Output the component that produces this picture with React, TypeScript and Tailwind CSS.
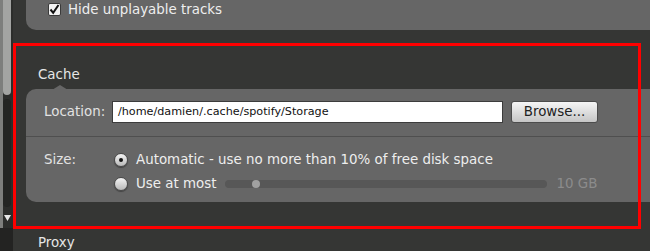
import React from "react";

const font = { fontFamily: '"DejaVu Sans", "Liberation Sans", sans-serif' };

function Radio({ checked }: { checked?: boolean }) {
  return (
    <span className="flex h-[14px] w-[14px] items-center justify-center rounded-full border border-[#4a4a4a] bg-gradient-to-b from-[#f4f4f4] to-[#b9b9b9] shadow-[0_1px_1px_rgba(0,0,0,0.35)]">
      {checked && <span className="h-[4px] w-[4px] rounded-full bg-[#111]" />}
    </span>
  );
}

function Scrollbar() {
  return (
    <div className="flex w-[13px] shrink-0 flex-col">
      <div className="flex h-[228px] bg-[#2c2d2b]">
        <div className="w-[3px] bg-[#7d7e7c]" />
        <div className="flex w-[8px] flex-col">
          <div className="h-[95px] rounded-b-[4px] bg-[#a3a4a2]" />
          <div className="mt-[4px] h-[108px] rounded-[4px] bg-[#242523]" />
          <div className="mt-[8px] flex justify-center">
            <svg width="7" height="6" viewBox="0 0 7 6">
              <path d="M0 0 L7 0 L3.5 6 Z" fill="#e8e8e8" />
            </svg>
          </div>
        </div>
      </div>
      <div className="flex-1 bg-[#232322]" />
    </div>
  );
}

export default function App() {
  return (
    <div
      className="relative flex h-[251px] w-[650px] overflow-hidden bg-[#353634] text-[13.4px] text-[#e4e4e4]"
      style={font}
    >
      <Scrollbar />

      <div className="flex flex-1 flex-col">
        {/* Previous section tail */}
        <div className="ml-[13px] flex h-[31px] items-start rounded-bl-[10px] bg-[#666666] pl-[22px] pt-[2px]">
          <span className="mt-[1px] flex h-[13px] w-[13px] items-center justify-center rounded-[2px] border border-[#3a3a3a] bg-[#f2f2f2]">
            <svg width="11" height="11" viewBox="0 0 11 11">
              <path d="M1.5 5.5 L4.2 8.8 L9.5 1" fill="none" stroke="#111" strokeWidth="2" />
            </svg>
          </span>
          <span className="ml-[7px] leading-[16px] text-[#eeeeee]">Hide unplayable tracks</span>
        </div>

        {/* Cache */}
        <div className="mt-[37px] pl-[25px] leading-[16px] text-[#e6e6e6]">Cache</div>
        <div className="relative ml-[13px] mt-[6px] flex flex-col rounded-l-[10px] bg-[#666666]">
          <svg
            className="absolute left-[26px] top-[-4px]"
            width="16"
            height="5"
            viewBox="0 0 16 5"
          >
            <path d="M0 5 L8 0 L16 5 Z" fill="#666666" />
          </svg>
          <div className="flex items-center pb-[13px] pl-[18px] pt-[12px]">
            <span className="w-[68px] text-[#e2e2e2]">Location:</span>
            <div className="flex h-[22px] w-[391px] items-center border border-[#3c3c3c] bg-white pl-[5px] text-[11.2px] text-[#111]">
              /home/damien/.cache/spotify/Storage
            </div>
            <button className="ml-[8px] h-[22px] w-[87px] rounded-[3px] border border-[#4c4c4c] bg-gradient-to-b from-[#f6f6f6] to-[#c6c6c6] text-[13.4px] text-[#222]">
              Browse...
            </button>
          </div>
          <div className="h-px bg-[#4f4f4f]" />
          <div className="flex pb-[6px] pl-[18px] pt-[11px]">
            <span className="w-[70px] pt-[4px] leading-[16px] text-[#e2e2e2]">Size:</span>
            <div className="flex flex-col">
              <div className="flex h-[24px] items-center">
                <Radio checked />
                <span className="ml-[8px] text-[#eeeeee]">
                  Automatic - use no more than 10% of free disk space
                </span>
              </div>
              <div className="flex h-[24px] items-center">
                <Radio />
                <span className="ml-[8px] text-[#eeeeee]">Use at most</span>
                <div className="ml-[9px] flex h-[8px] w-[322px] items-center rounded-full bg-[#575757]">
                  <span className="ml-[27px] h-[8px] w-[8px] rounded-full bg-[#a0a0a0]" />
                </div>
                <span className="ml-[9px] text-[#8c8c8c]">10 GB</span>
              </div>
            </div>
          </div>
        </div>

        {/* Proxy */}
        <div className="mt-[33px] pl-[25px] leading-[16px] text-[#e6e6e6]">Proxy</div>
      </div>

      {/* Annotation frame */}
      <div className="pointer-events-none absolute left-[13px] top-[43px] h-[186px] w-[628px] border-[3px] border-[#ff0000]" />
    </div>
  );
}
